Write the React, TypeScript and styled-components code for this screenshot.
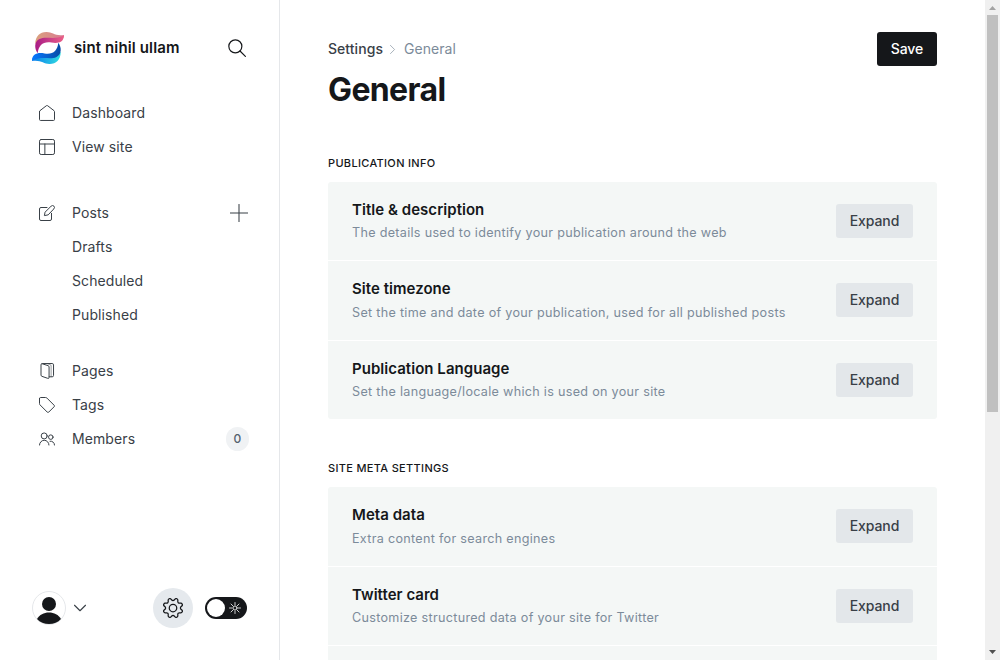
import React from "react";
import styled, { createGlobalStyle } from "styled-components";

const GlobalStyle = createGlobalStyle`
  *, *::before, *::after { box-sizing: border-box; }
  body {
    margin: 0;
    overflow: hidden;
    background: #fff;
    color: #15171a;
    font-family: Inter, "Liberation Sans", sans-serif;
    font-size: 14px;
  }
  svg { display: block; flex: none; }
  h1, h2, h3, p { margin: 0; }
  button { font: inherit; border: 0; padding: 0; cursor: pointer; }
`;

const Shell = styled.div`
  display: flex;
  height: 660px;
`;

const Sidebar = styled.aside`
  display: flex;
  flex-direction: column;
  width: 280px;
  flex: none;
  border-right: 1px solid #e5e7ea;
`;

const SiteHeader = styled.header`
  display: flex;
  align-items: center;
  height: 96px;
  padding: 0 33px 0 32px;
`;

const SiteName = styled.span`
  flex: 1;
  margin-left: 10px;
  padding-bottom: 1px;
  font-size: 15px;
  font-weight: 600;
  letter-spacing: 0.13px;
`;

const NavGroup = styled.nav<{ $gap: number }>`
  margin-bottom: ${(p) => p.$gap}px;
`;

const NavRow = styled.div`
  display: flex;
  align-items: center;
  height: 34px;
  padding: 0 31px 0 39px;
  color: #394047;
  letter-spacing: 0.1px;
`;

const NavIcon = styled.span`
  width: 33px;
  flex: none;
`;

const NavLabel = styled.span`
  flex: 1;
  padding-bottom: 2px;
`;

const Count = styled.span`
  width: 23px;
  height: 24px;
  margin-right: -1px;
  border-radius: 12px;
  background: #f0f2f4;
  font-size: 12px;
  font-weight: 500;
  line-height: 24px;
  text-align: center;
  color: #54616d;
`;

const SidebarFooter = styled.footer`
  display: flex;
  align-items: center;
  height: 104px;
  margin-top: auto;
  padding: 0 32px;
`;

const Caret = styled.span`
  flex: 1;
  margin-left: 8px;
`;

const SettingsButton = styled.button`
  display: grid;
  place-items: center;
  width: 40px;
  height: 40px;
  border-radius: 50%;
  background: #e5e9ed;
`;

const ThemeToggle = styled.div`
  display: flex;
  align-items: center;
  justify-content: space-between;
  width: 42px;
  height: 22px;
  margin-left: 12px;
  padding: 0 6px 0 2px;
  border-radius: 11px;
  background: #15171a;
`;

const Knob = styled.span`
  width: 18px;
  height: 18px;
  border-radius: 50%;
  background: #fff;
`;

const Main = styled.main`
  flex: 1;
  min-width: 0;
  overflow: hidden;
  padding: 32px 48px 0;
`;

const PageHeader = styled.header`
  display: flex;
  align-items: flex-start;
  justify-content: space-between;
  height: 77px;
`;

const Breadcrumb = styled.div`
  display: flex;
  align-items: center;
  height: 34px;
  font-weight: 500;
  letter-spacing: 0.05px;
  color: #394047;
`;

const Crumb = styled.span<{ $current?: boolean }>`
  padding-bottom: 2px;
  font-weight: ${(p) => (p.$current ? 400 : 500)};
  color: ${(p) => (p.$current ? "#7c8b9a" : "#394047")};
`;

const Chevron = styled.span`
  margin: 0 7px 0 5px;
`;

const Heading = styled.h1`
  margin-top: 4px;
  font-size: 32px;
  font-weight: 700;
  line-height: 40px;
  letter-spacing: -0.64px;
`;

const Button = styled.button<{ $primary?: boolean }>`
  flex: none;
  width: ${(p) => (p.$primary ? 60 : 77)}px;
  height: 34px;
  padding-bottom: 1.1px;
  border-radius: 3px;
  background: ${(p) => (p.$primary ? "#15171a" : "#e3e7ea")};
  color: ${(p) => (p.$primary ? "#fff" : "#394047")};
  font-weight: 500;
  letter-spacing: -0.1px;
`;

const Section = styled.section`
  padding-top: 48px;
  & + & { padding-top: 43.3px; }
`;

const SectionTitle = styled.h2`
  height: 20px;
  margin-bottom: 5px;
  padding-top: 2px;
  font-size: 11px;
  font-weight: 450;
  line-height: 8px;
  letter-spacing: 0.32px;
  text-transform: uppercase;
`;

const Rows = styled.div`
  overflow: hidden;
  border-radius: 3px;
  background: #f4f7f6;
`;

const SettingRow = styled.div`
  display: flex;
  align-items: flex-start;
  justify-content: space-between;
  height: 79.4px;
  padding: 18px 24px 0;
  border-bottom: 1px solid #fff;
  &:last-child { height: 78.2px; border-bottom: 0; }
  & > button { margin-top: 4px; }
`;

const SettingTitle = styled.h3`
  font-size: 15px;
  font-weight: 600;
  line-height: 20px;
  letter-spacing: 0.04px;
`;

const SettingText = styled.p`
  margin-top: 3.4px;
  font-size: 12.6px;
  line-height: 19px;
  letter-spacing: 0.3px;
  color: #7c8b9a;
`;

const ScrollTrack = styled.div`
  display: flex;
  flex-direction: column;
  align-items: center;
  justify-content: space-between;
  width: 15px;
  flex: none;
  background: #f0f0f0;
`;

const ScrollThumb = styled.div`
  width: 11px;
  height: 397px;
  margin: 0 0 auto;
  background: #c0c0c0;
`;

const Logo = () => (
  <svg width="32" height="32" viewBox="0 0 32 32">
    <defs>
      <linearGradient id="pink" x1="0" x2="1">
        <stop stopColor="#a81c86" />
        <stop offset="1" stopColor="#eb6088" />
      </linearGradient>
      <linearGradient id="peach" x1="0" x2="1">
        <stop stopColor="#dba27e" />
        <stop offset="1" stopColor="#d87991" />
      </linearGradient>
      <linearGradient id="blue" x1="0" x2="1">
        <stop stopColor="#0878ff" />
        <stop offset="1" stopColor="#074ba5" />
      </linearGradient>
      <linearGradient id="aqua" x1="0" x2="1">
        <stop stopColor="#087bed" />
        <stop offset="1" stopColor="#32dfdf" />
      </linearGradient>
    </defs>
    <path fill="url(#peach)" d="M3.200 12C3.500 4 8 0 14.500.1 20.500 0 23 4.500 32 3c-.2 5-5 7.600-11 6.500C13 8.200 7 8 3.200 12z" />
    <path fill="url(#pink)" d="M5.700 21.200C2 16 2.400 9.500 7.500 7c7-3.400 13.500 1.600 24.500-3.500-.2 6.500-5.500 8.300-12.500 7-8-1.500-13 2.500-13.800 10.700z" />
    <path fill="url(#aqua)" d="M28.800 20c-.3 8-4.800 12-11.300 11.900-6 .1-8.500-4.400-17.500-2.900.2-5 5-7.600 11-6.500 8 1.300 14 1.500 17.800-2.500z" />
    <path fill="url(#blue)" d="M26.300 10.800c3.700 5.200 3.300 11.700-1.800 14.200-7 3.400-13.500-1.600-24.500 3.500.2-6.500 5.500-8.300 12.500-7 8 1.500 13-2.500 13.800-10.700z" />
  </svg>
);

type IconName = "home" | "layout" | "edit" | "pages" | "tag" | "members" | "search" | "plus" | "gear" | "down" | "right" | "sun";

const shapes: Record<IconName, React.ReactNode> = {
  home: <path d="M.75 9.800V21.700a1.500 1.500 0 0 0 1.500 1.500h19.500a1.500 1.500 0 0 0 1.500-1.500V9.800a1.500 1.500 0 0 0-.6-1.200L12.900 1.050a1.500 1.500 0 0 0-1.800 0L1.350 8.600a1.500 1.500 0 0 0-.6 1.200z" />,
  layout: <><rect x=".75" y=".75" width="22.500" height="22.500" rx="2.500" /><path d="M.75 7.500h22.500M8.800 7.500v15.750" /></>,
  edit: <><path d="M12 3.750H3a2.250 2.250 0 0 0-2.250 2.250v15A2.250 2.250 0 0 0 3 23.250h13.500A2.250 2.250 0 0 0 18.750 21v-8.500" /><path d="m13.200 14.900-5.100 1 1-5.100 9.200-9.200a2.900 2.900 0 0 1 4.100 4.100z" /></>,
  pages: <><path d="m4.700 1.100 9 2.900a2 2 0 0 1 1.400 1.900v15.700a1.500 1.500 0 0 1-2 1.400l-8.700-3A2 2 0 0 1 3 18.100V2.800a2 2 0 0 1 2-2h14.800a2 2 0 0 1 2 2v15.900a2 2 0 0 1-2 2h-4.500" /><path d="m12.500 1 4.300 1.500a2 2 0 0 1 1.400 1.900v16.100" strokeOpacity=".5" /></>,
  tag: <path d="M.75 2.250v7.600a3 3 0 0 0 .9 2.100l10.800 10.800a1.500 1.500 0 0 0 2.100 0l8.200-8.200a1.500 1.500 0 0 0 0-2.100L11.950 1.650a3 3 0 0 0-2.100-.9h-7.600a1.500 1.500 0 0 0-1.500 1.500z" />,
  members: <><circle cx="7.800" cy="7.400" r="4.500" /><path d="M.75 21a7.100 7.100 0 0 1 14.200 0" /><circle cx="17.700" cy="9.200" r="3.400" /><path d="M16.500 15.300A5.500 5.500 0 0 1 23.250 21" /></>,
  search: <><circle cx="9.800" cy="9.800" r="8.700" /><path d="m16 16 7.200 7.200" /></>,
  plus: <path d="M12 .5v23M.5 12h23" />,
  gear: <><path d="M10.546 2.438a1.957 1.957 0 0 0 2.908 0L14.400 1.400a1.959 1.959 0 0 1 3.410 1.413l-.071 1.400A1.958 1.958 0 0 0 19.790 6.270l1.400-.071A1.959 1.959 0 0 1 22.600 9.600l-1.040.944a1.958 1.958 0 0 0 0 2.908l1.040.948a1.959 1.959 0 0 1-1.413 3.410l-1.400-.071a1.958 1.958 0 0 0-2.056 2.056l.071 1.400A1.959 1.959 0 0 1 14.400 22.600l-.941-1.041a1.957 1.957 0 0 0-2.908 0L9.600 22.600A1.959 1.959 0 0 1 6.200 21.192l.072-1.400a1.958 1.958 0 0 0-2.056-2.056l-1.400.071A1.958 1.958 0 0 1 1.400 14.400l1.041-.944a1.958 1.958 0 0 0 0-2.908L1.400 9.600A1.958 1.958 0 0 1 2.813 6.200l1.400.071a1.958 1.958 0 0 0 2.058-2.060L6.200 2.810A1.959 1.959 0 0 1 9.600 1.400z" /><circle cx="12" cy="12" r="4.500" /></>,
  down: <path d="m1 6.500 11 11 11-11" />,
  right: <path d="m6.500 1 11 11-11 11" />,
  sun: <><circle cx="12" cy="12" r="4" /><path d="M12 1v5M12 18v5M1 12h5M18 12h5M4 4l4 4M16 16l4 4M20 4l-4 4M8 16l-4 4" /></>,
};

const Icon = ({ name, size = 16, stroke = 1.5, color = "#394047" }: { name: IconName; size?: number; stroke?: number; color?: string }) => (
  <svg width={size} height={size} viewBox="0 0 24 24" fill="none" stroke={color} strokeWidth={stroke} strokeLinecap="round" strokeLinejoin="round">
    {shapes[name]}
  </svg>
);

const Avatar = () => (
  <svg width="34" height="34" viewBox="0 0 34 34">
    <circle cx="17" cy="17" r="16.500" fill="#fff" stroke="#e5e7ea" />
    <circle cx="17" cy="13" r="7" fill="#15171a" />
    <path d="M5 28c2.500-4.300 6.800-6.500 12-6.500S26.500 23.700 29 28c-3 3.400-7.200 5-12 5S8 31.400 5 28z" fill="#15171a" />
  </svg>
);

interface NavItem {
  label: string;
  icon?: IconName;
  extra?: React.ReactNode;
}

const groups: { gap: number; items: NavItem[] }[] = [
  { gap: 32, items: [{ label: "Dashboard", icon: "home" }, { label: "View site", icon: "layout" }] },
  {
    gap: 22,
    items: [
      { label: "Posts", icon: "edit", extra: <Icon name="plus" size={18} stroke={1.4} /> },
      { label: "Drafts" },
      { label: "Scheduled" },
      { label: "Published" },
    ],
  },
  {
    gap: 0,
    items: [
      { label: "Pages", icon: "pages" },
      { label: "Tags", icon: "tag" },
      { label: "Members", icon: "members", extra: <Count>0</Count> },
    ],
  },
];

const sections = [
  {
    title: "Publication info",
    rows: [
      ["Title & description", "The details used to identify your publication around the web"],
      ["Site timezone", "Set the time and date of your publication, used for all published posts"],
      ["Publication Language", "Set the language/locale which is used on your site"],
    ],
  },
  {
    title: "Site meta settings",
    rows: [
      ["Meta data", "Extra content for search engines"],
      ["Twitter card", "Customize structured data of your site for Twitter"],
      ["Facebook card", "Customize Open Graph data of your site"],
    ],
  },
];

export default function App() {
  return (
    <Shell>
      <GlobalStyle />
      <Sidebar>
        <SiteHeader>
          <Logo />
          <SiteName>sint nihil ullam</SiteName>
          <Icon name="search" size={18} stroke={1.6} color="#15171a" />
        </SiteHeader>
        {groups.map((group, i) => (
          <NavGroup key={i} $gap={group.gap}>
            {group.items.map((item) => (
              <NavRow key={item.label}>
                <NavIcon>{item.icon && <Icon name={item.icon} />}</NavIcon>
                <NavLabel>{item.label}</NavLabel>
                {item.extra}
              </NavRow>
            ))}
          </NavGroup>
        ))}
        <SidebarFooter>
          <Avatar />
          <Caret>
            <Icon name="down" size={12} stroke={2.2} />
          </Caret>
          <SettingsButton aria-label="Settings">
            <Icon name="gear" size={20} color="#15171a" />
          </SettingsButton>
          <ThemeToggle>
            <Knob />
            <Icon name="sun" size={12} stroke={1.6} color="#fff" />
          </ThemeToggle>
        </SidebarFooter>
      </Sidebar>
      <Main>
        <PageHeader>
          <div>
            <Breadcrumb>
              <Crumb>Settings</Crumb>
              <Chevron>
                <Icon name="right" size={9} stroke={2.2} color="#95a1ad" />
              </Chevron>
              <Crumb $current>General</Crumb>
            </Breadcrumb>
            <Heading>General</Heading>
          </div>
          <Button $primary>Save</Button>
        </PageHeader>
        {sections.map((section) => (
          <Section key={section.title}>
            <SectionTitle>{section.title}</SectionTitle>
            <Rows>
              {section.rows.map(([title, text]) => (
                <SettingRow key={title}>
                  <div>
                    <SettingTitle>{title}</SettingTitle>
                    <SettingText>{text}</SettingText>
                  </div>
                  <Button>Expand</Button>
                </SettingRow>
              ))}
            </Rows>
          </Section>
        ))}
      </Main>
      <ScrollTrack>
        <svg width="15" height="15" viewBox="0 0 15 15">
          <path d="M4 10h7L7.500 6z" fill="#a3a3a3" />
        </svg>
        <ScrollThumb />
        <svg width="15" height="15" viewBox="0 0 15 15">
          <path d="M4 5h7L7.500 9z" fill="#505050" />
        </svg>
      </ScrollTrack>
    </Shell>
  );
}
